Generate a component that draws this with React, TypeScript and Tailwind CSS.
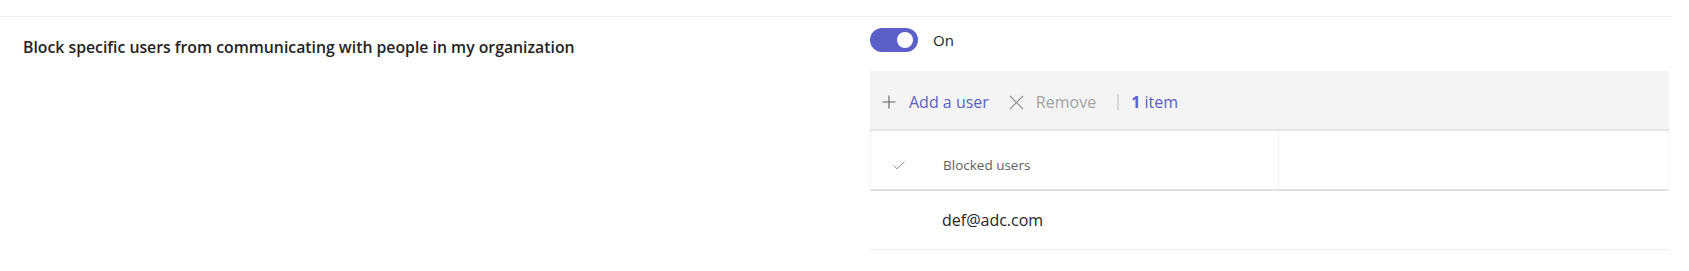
import React from "react";

const PlusIcon = () => (
  <svg width="14" height="14" viewBox="0 0 14 14" fill="none">
    <path d="M7 0.5V13.5M0.5 7H13.5" stroke="#616161" strokeWidth="1.1" />
  </svg>
);

const CloseIcon = () => (
  <svg width="15" height="15" viewBox="0 0 15 15" fill="none">
    <path d="M1 1L14 14M14 1L1 14" stroke="#8f8f8f" strokeWidth="1.1" />
  </svg>
);

const CheckIcon = () => (
  <svg width="12" height="9" viewBox="0 0 12 9" fill="none">
    <path d="M0.6 4.4L4 7.8L11.4 0.6" stroke="#8a8a8a" strokeWidth="1" />
  </svg>
);

const Toggle = () => (
  <div className="w-12 h-6 rounded-full bg-[#5b5fc7] flex items-center justify-end pr-[5px]">
    <div className="w-4 h-4 rounded-full bg-white" />
  </div>
);

export default function App() {
  const blocked = ["def@adc.com"];

  return (
    <div className="w-[1689px] h-[271px] pt-4 bg-white font-['Open_Sans','Noto_Sans',sans-serif] text-[#242424]">
      <div className="w-[1672px] border-t border-[#f0f0f0] flex">
        <div className="w-[870px] pl-[23px] pt-5 text-[15.8px] leading-5 font-semibold">
          Block specific users from communicating with people in my organization
        </div>

        <div className="w-[799px]">
          <div className="mt-[11px] h-6 flex items-center gap-[15px]">
            <Toggle />
            <span className="text-[15px]">On</span>
          </div>

          <div className="mt-[19px] h-[60px] bg-[#f4f4f4] border-b-2 border-[#e6e6e6] flex items-center pl-3 pt-1 text-[16px]">
            <PlusIcon />
            <span className="ml-[13px] text-[#5b5fc7]">Add a user</span>
            <span className="ml-[20px]"><CloseIcon /></span>
            <span className="ml-[12px] text-[#a3a3a3]">Remove</span>
            <span className="ml-[21px] w-[2px] h-4 bg-[#d6d6d6]" />
            <span className="ml-3 text-[#5b5fc7]">
              <span className="font-bold">1</span> item
            </span>
          </div>

          <div className="h-[60px] flex border-b-2 border-[#e0e0e0] border-x border-x-[#f4f4f4]">
            <div className="w-[408px] flex items-center pt-[10px] border-r border-[#efefef]">
              <div className="w-[72px] pl-[22px]">
                <CheckIcon />
              </div>
              <span className="text-[13.5px] text-[#616161]">Blocked users</span>
            </div>
            <div className="flex-1" />
          </div>

          {blocked.map((email) => (
            <div key={email} className="h-[59px] flex items-center border-b border-[#ededed]">
              <span className="ml-[72px] text-[16px]">{email}</span>
            </div>
          ))}
        </div>
      </div>
    </div>
  );
}
